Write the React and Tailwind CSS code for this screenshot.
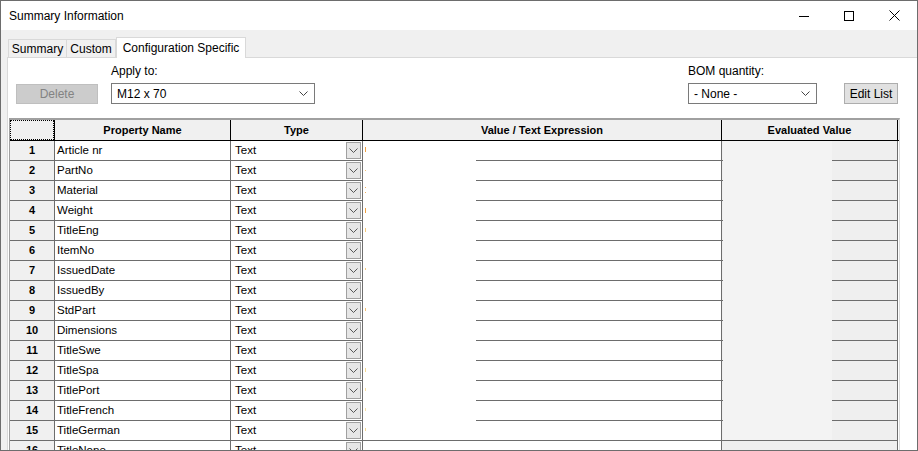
import React from 'react';

const ROWS = [
  'Article nr',
  'PartNo',
  'Material',
  'Weight',
  'TitleEng',
  'ItemNo',
  'IssuedDate',
  'IssuedBy',
  'StdPart',
  'Dimensions',
  'TitleSwe',
  'TitleSpa',
  'TitlePort',
  'TitleFrench',
  'TitleGerman',
  'TitleNone',
];

// tiny clipped glyph remains peeking out from under the blanked area
const MARKS = [
  { top: 6, h: 5, c: '#f0a040' },
  { top: 29, h: 1, c: '#f5c070' },
  { top: 46, h: 1, c: '#f0b060' },
  { top: 51, h: 1, c: '#f0b060' },
  { top: 67, h: 5, c: '#f0a040' },
  { top: 87, h: 4, c: '#f5c878' },
  { top: 127, h: 2, c: '#f5c878' },
  { top: 167, h: 3, c: '#f5c070' },
  { top: 227, h: 4, c: '#f5d890' },
  { top: 247, h: 3, c: '#f8e0a0' },
  { top: 267, h: 3, c: '#f8e0a0' },
  { top: 287, h: 3, c: '#f5d890' },
];

function Chevron({ className }) {
  return (
    <svg width="9" height="5" viewBox="0 0 9 5" className={className}>
      <path d="M0.5 0.5 L4.5 4.5 L8.5 0.5" fill="none" stroke="currentColor" strokeWidth="1" />
    </svg>
  );
}

function TitleBar() {
  return (
    <div className="flex h-[29px] shrink-0 items-center bg-white">
      <span className="pl-[8px] text-[12px] text-black">Summary Information</span>
      <div className="ml-auto flex h-full">
        <div className="flex h-full w-[44px] items-center justify-center">
          <svg width="10" height="10" viewBox="0 0 10 10">
            <path d="M0 5.5 H10" stroke="#000" strokeWidth="1" />
          </svg>
        </div>
        <div className="flex h-full w-[45px] items-center justify-center">
          <svg width="10" height="10" viewBox="0 0 10 10">
            <rect x="0.5" y="0.5" width="9" height="9" fill="none" stroke="#000" strokeWidth="1" />
          </svg>
        </div>
        <div className="flex h-full w-[46px] items-center justify-center">
          <svg width="11" height="11" viewBox="0 0 11 11">
            <path d="M0.5 0.5 L10.5 10.5 M10.5 0.5 L0.5 10.5" stroke="#000" strokeWidth="1" />
          </svg>
        </div>
      </div>
    </div>
  );
}

function Tabs() {
  return (
    <div className="flex h-[27px] shrink-0 items-end pl-[7px]">
      <div className="flex h-[18px] w-[58px] items-center justify-center border-l border-t border-[#d9d9d9] text-[12px] text-black">
        Summary
      </div>
      <div className="flex h-[18px] w-[50px] items-center justify-center border-x border-t border-[#d9d9d9] text-[12px] text-black">
        Custom
      </div>
      <div className="relative z-10 -mb-px flex h-[21px] w-[130px] items-center justify-center border-x border-t border-[#d9d9d9] bg-white pb-[1px] text-[12px] text-black">
        Configuration Specific
      </div>
    </div>
  );
}

function Combo({ value, width }) {
  return (
    <div
      className={`flex h-[21px] items-center justify-between border border-[#7a7a7a] bg-white pl-[5px] pr-[6px] text-[12px] text-black ${width}`}
    >
      <span>{value}</span>
      <Chevron className="text-[#444]" />
    </div>
  );
}

function Toolbar() {
  return (
    <div className="flex items-end pl-[8px] pt-[5px]">
      <div className="flex h-[20px] w-[82px] items-center justify-center border border-[#bfbfbf] bg-[#cccccc] text-[12px] text-[#838383]">
        Delete
      </div>
      <div className="ml-[13px] flex flex-col">
        <span className="mb-[4px] h-[16px] text-[12px] leading-[16px] text-black">Apply to:</span>
        <Combo value="M12 x 70" width="w-[204px]" />
      </div>
      <div className="ml-[373px] flex flex-col">
        <span className="mb-[4px] h-[16px] text-[12px] leading-[16px] text-black">BOM quantity:</span>
        <Combo value="- None -" width="w-[129px]" />
      </div>
      <div className="ml-[27px] flex h-[21px] w-[54px] items-center justify-center border border-[#adadad] bg-[#e1e1e1] text-[12px] text-black">
        Edit List
      </div>
    </div>
  );
}

const COLS = 'grid grid-cols-[45px_176px_132px_359px_176px]';

function Grid() {
  return (
    <div className="ml-[1px] mt-[14px] w-[891px] border-l border-r border-t-2 border-[#a0a0a0] border-r-[#dcdcdc] font-['Liberation_Sans',Arial,sans-serif] text-[11.5px] text-black">
      <div className={`${COLS} h-[21px] border-b border-black bg-[#f0f0f0] text-[11px] font-bold`}>
        <div className="border-r border-black">
          <div className="h-full w-full border border-dotted border-black" />
        </div>
        <div className="flex items-center justify-center border-r border-black">Property Name</div>
        <div className="flex items-center justify-center border-r border-black">Type</div>
        <div className="flex items-center justify-center border-r border-black">Value / Text Expression</div>
        <div className="flex items-center justify-center border-r border-black">Evaluated Value</div>
      </div>
      <div className="relative">
        {ROWS.map((name, i) => (
          <div key={name} className={`${COLS} h-[20px]`}>
            <div className="flex items-center justify-center border-b border-r border-[#6d6d6d] bg-[#f0f0f0] text-[11px] font-bold">
              {i + 1}
            </div>
            <div className="flex items-center border-b border-r border-[#6d6d6d] bg-white pl-[2px]">{name}</div>
            <div className="flex items-center justify-between border-b border-r border-[#6d6d6d] bg-white pl-[4px]">
              <span>Text</span>
              <div className="mb-[1px] mr-[1px] flex h-[17px] w-[15px] items-center justify-center border border-[#a0a0a0] bg-[#e6e6e6]">
                <Chevron className="text-[#555]" />
              </div>
            </div>
            <div className="border-b border-r border-[#6d6d6d] bg-white" />
            <div className="border-b border-r border-[#6d6d6d] bg-[#efefef]" />
          </div>
        ))}
        <div className="absolute left-[353px] top-0 h-[299px] w-[113px] bg-white" />
        <div className="absolute left-[713px] top-0 h-[299px] w-[109px] bg-[#f3f3f3]" />
        {MARKS.map((m, i) => (
          <div
            key={i}
            className="absolute left-[355px] w-px"
            style={{ top: m.top, height: m.h, backgroundColor: m.c }}
          />
        ))}
      </div>
    </div>
  );
}

export default function App() {
  return (
    <div className="flex h-[451px] w-[918px] flex-col overflow-hidden border border-[#6d6d6d] bg-[#f0f0f0] font-['Liberation_Sans',Arial,sans-serif]">
      <TitleBar />
      <Tabs />
      <div className="ml-[6px] flex flex-1 flex-col border-l border-t border-[#d9d9d9] bg-white">
        <Toolbar />
        <Grid />
      </div>
    </div>
  );
}
